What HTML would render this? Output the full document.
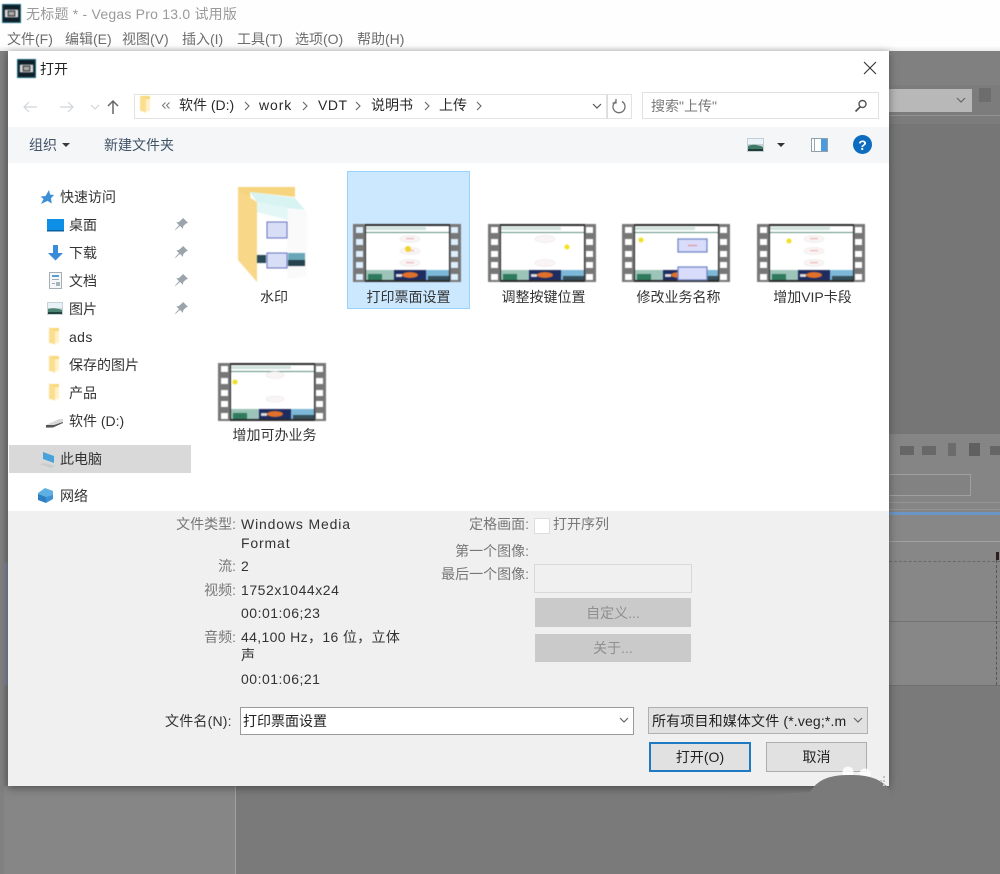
<!DOCTYPE html>
<html lang="zh"><head><meta charset="utf-8"><title>打开</title>
<style>
html,body{margin:0;padding:0;width:1000px;height:874px;overflow:hidden;background:#7a7a7a}
body{position:relative;font-family:"Liberation Sans","Noto Sans CJK SC",sans-serif;font-size:14px;color:#333;filter:blur(.3px)}
.a,.t{position:absolute}
.t{white-space:nowrap;line-height:20px}
.c{text-align:center}
.r{text-align:right}
.g{color:#777}
svg{position:absolute;overflow:visible}
.soft{filter:blur(.45px)}
</style></head><body>
<svg width="0" height="0" style="position:absolute"><defs>
<symbol id="film" viewBox="0 0 108 58" overflow="visible">
<rect width="108" height="58" fill="#777"/>
<g fill="#fff"><rect x="3" y="3" width="7" height="6"/><rect x="3" y="15" width="7" height="6"/><rect x="3" y="27" width="7" height="6"/><rect x="3" y="38" width="7" height="6"/><rect x="3" y="50" width="7" height="6"/><rect x="98" y="3" width="7" height="6"/><rect x="98" y="15" width="7" height="6"/><rect x="98" y="27" width="7" height="6"/><rect x="98" y="38" width="7" height="6"/><rect x="98" y="50" width="7" height="6"/></g>
<rect x="12" width="85" height="58" fill="#2b2b2b"/>
<rect x="13" y="2" width="83" height="54" fill="#fff"/>
<rect x="13" y="3" width="60" height="3" fill="#cfe3dc"/>
<rect x="13" y="8" width="83" height="1" fill="#5e8f80"/>
<rect x="13" y="46" width="28" height="10" fill="#9cc4b8"/><rect x="15" y="50" width="14" height="6" fill="#2f7a5d"/>
<rect x="41" y="46" width="32" height="10" fill="#1f2c60"/><ellipse cx="57" cy="51" rx="8" ry="3" fill="#e0702c"/><rect x="43" y="50" width="6" height="3" fill="#ddd"/>
<rect x="73" y="46" width="23" height="10" fill="#7db8d8"/><rect x="75" y="52" width="21" height="4" fill="#35505a"/>
</symbol>
<symbol id="ovals" viewBox="0 0 108 58" overflow="visible"><g fill="#f9f5f5" stroke="#ece4e4" stroke-width=".6"><ellipse cx="57" cy="15" rx="10" ry="3.500"/><ellipse cx="57" cy="27" rx="10" ry="3.500"/><ellipse cx="57" cy="39" rx="10" ry="3.500"/></g><g fill="#eeb6b6"><rect x="53" y="14" width="8" height="1.200"/><rect x="53" y="26" width="8" height="1.200"/><rect x="53" y="38" width="8" height="1.200"/></g></symbol>
<symbol id="mini" viewBox="0 0 14 17" overflow="visible"><path d="M2 0h10v15H2z" fill="#f9d676"/><path d="M2 0l6 3v14l-6-3z" fill="#fbdf90"/><path d="M8 3h4v12H8z" fill="#fff0c6"/></symbol>
<symbol id="pin" viewBox="0 0 12 12" overflow="visible"><path d="M7.500 0l4.500 4.500-2 .7-2.400 2.400-.3 2.400-2.700-2.700L1 10.500 0 11.500.5 10 3.700 6.600 1.200 4l2.400-.3L6 1.500z" fill="#9ba3ab"/></symbol>
<symbol id="vegas" viewBox="0 0 20 20" overflow="visible"><rect width="20" height="20" fill="#10202a"/><rect x=".5" y=".5" width="19" height="19" fill="none" stroke="#1b6d80"/><rect x="3" y="6" width="14" height="8" fill="#d9d9d9"/><rect x="6" y="7" width="8" height="6" fill="#222"/><rect x="7" y="8" width="6" height="4" fill="#aaa"/></symbol>
</defs></svg>

<!-- App chrome -->
<div class="a" style="left:0;top:0;width:1000px;height:51px;background:#fefefe"></div>
<div class="a" style="left:0;top:46px;width:1000px;height:6px;background:linear-gradient(#fefefe,#e6e6e6)"></div>
<svg style="left:2px;top:4px" width="19" height="19" class="soft"><use href="#vegas" width="19" height="19"/></svg>
<div class="t" style="left:26px;top:4px;font-size:14px;color:#9a9a9a;letter-spacing:.22px">无标题 * - Vegas Pro 13.0 试用版</div>
<div class="t" style="left:7px;top:29px;color:#6d6d6d">文件(F)</div>
<div class="t" style="left:65px;top:29px;color:#6d6d6d">编辑(E)</div>
<div class="t" style="left:122px;top:29px;color:#6d6d6d">视图(V)</div>
<div class="t" style="left:182px;top:29px;color:#6d6d6d">插入(I)</div>
<div class="t" style="left:237px;top:29px;color:#6d6d6d">工具(T)</div>
<div class="t" style="left:295px;top:29px;color:#6d6d6d">选项(O)</div>
<div class="t" style="left:357px;top:29px;color:#6d6d6d">帮助(H)</div>

<!-- Background panels -->
<div class="a" style="left:0;top:51px;width:1000px;height:823px;background:#7a7a7a"></div>
<div class="a" style="left:0;top:51px;width:4px;height:823px;background:#808080"></div>
<div class="a" style="left:4px;top:786px;width:232px;height:88px;background:#868686"></div>
<div class="a" style="left:235px;top:786px;width:1px;height:88px;background:#a2a2a2"></div>
<div class="a" style="left:4px;top:563px;width:4px;height:122px;background:#7b8196"></div>
<div class="a" style="left:889px;top:51px;width:111px;height:34px;background:#808080"></div>
<div class="a" style="left:889px;top:85px;width:111px;height:39px;background:#7c7c7c"></div>
<div class="a" style="left:889px;top:89px;width:83px;height:23px;background:#b8b8b8"></div>
<svg style="left:955px;top:96px" width="12" height="8"><path d="M2 2l4 4 4-4" fill="none" stroke="#666" stroke-width="1.2"/></svg>
<div class="a" style="left:979px;top:88px;width:12px;height:14px;background:#6d6d6d"></div>
<div class="a" style="left:889px;top:115px;width:111px;height:1px;background:#939393"></div>
<div class="a" style="left:889px;top:124px;width:111px;height:310px;background:#767676"></div>
<div class="a" style="left:889px;top:434px;width:111px;height:80px;background:#858585"></div>
<div class="a" style="left:900px;top:446px;width:14px;height:9px;background:#666"></div>
<div class="a" style="left:922px;top:446px;width:14px;height:9px;background:#686868"></div>
<div class="a" style="left:948px;top:443px;width:8px;height:13px;background:#6c6c6c"></div>
<div class="a" style="left:969px;top:443px;width:11px;height:13px;background:#606060"></div>
<div class="a" style="left:990px;top:446px;width:10px;height:9px;background:#666"></div>
<div class="a" style="left:889px;top:474px;width:81px;height:20px;border:1px solid #a0a0a0;border-left:0;background:#828282"></div>
<div class="a" style="left:889px;top:502px;width:111px;height:1px;background:#949494"></div>
<div class="a" style="left:889px;top:509px;width:111px;height:1px;background:#949494"></div>
<div class="a" style="left:889px;top:512px;width:111px;height:3px;background:#6d96c8"></div>
<div class="a" style="left:889px;top:515px;width:111px;height:170px;background:#878787"></div>
<div class="a" style="left:889px;top:541px;width:111px;height:1px;background:#a0a0a0"></div>
<div class="a" style="left:889px;top:561px;width:111px;height:1px;border-top:1px dashed #6a6a6a"></div>
<div class="a" style="left:889px;top:621px;width:111px;height:1px;background:#727272"></div>
<div class="a" style="left:889px;top:685px;width:111px;height:1px;background:#6f6f6f"></div>
<div class="a" style="left:996px;top:552px;width:3px;height:8px;background:#2d1f1f"></div>
<div class="a" style="left:996px;top:560px;width:0;height:125px;border-left:1px dashed #555"></div>

<!-- Dialog -->
<div class="a" style="left:8px;top:51px;width:881px;height:735px;background:#fff;box-shadow:0 2px 8px rgba(30,30,30,.5)"></div>
<svg style="left:17px;top:59px" width="19" height="19" class="soft"><use href="#vegas" width="19" height="19"/></svg>
<div class="t" style="left:40px;top:59px;color:#222">打开</div>
<svg style="left:863px;top:61px" width="14" height="14"><path d="M1 1l12 12M13 1L1 13" stroke="#333" stroke-width="1.1" fill="none"/></svg>

<!-- Nav -->
<svg style="left:22px;top:98px" width="120" height="18">
<g fill="none" stroke="#d0d5da" stroke-width="1.2"><path d="M2 9h13M7 4L2 9l5 5"/><path d="M38 9h13M46 4l5 5-5 5"/><path d="M69 7l4 4 4-4"/></g>
<path d="M91 16V3M86 8l5-5 5 5" fill="none" stroke="#666" stroke-width="1.5"/></svg>
<div class="a" style="left:134px;top:94px;width:471px;height:23px;border:1px solid #e2e2e2;background:#fff"></div>
<svg style="left:138px;top:96px" width="14" height="17" class="soft"><use href="#mini" width="14" height="17"/></svg>
<svg style="left:161px;top:101px" width="10" height="9"><path d="M4.500 1.500L1.500 4.500l3 3M8.500 1.500l-3 3 3 3" fill="none" stroke="#777" stroke-width="1"/></svg>
<div class="t" style="left:179px;top:95px;color:#2a2a2a">软件 (D:)</div>
<div class="t" style="left:259px;top:95px;color:#2a2a2a;letter-spacing:.9px">work</div>
<div class="t" style="left:318px;top:95px;color:#2a2a2a;letter-spacing:.5px">VDT</div>
<div class="t" style="left:371px;top:95px;color:#2a2a2a">说明书</div>
<div class="t" style="left:439px;top:95px;color:#2a2a2a">上传</div>
<svg style="left:240px;top:100px" width="250" height="12"><g fill="none" stroke="#666" stroke-width="1.1"><path d="M5 2l4 4-4 4M63 2l4 4-4 4M116 2l4 4-4 4M185 2l4 4-4 4M237 2l4 4-4 4"/></g></svg>
<svg style="left:591px;top:102px" width="12" height="9"><path d="M2 2l4 4 4-4" fill="none" stroke="#555" stroke-width="1.2"/></svg>
<div class="a" style="left:607px;top:94px;width:23px;height:23px;border:1px solid #e2e2e2;border-left:1px solid #dcdcdc"></div>
<svg style="left:611px;top:98px" width="16" height="16"><path d="M5 3.500a6 6 0 1 0 6 0M5 1v4H1.500" fill="none" stroke="#707070" stroke-width="1.300"/></svg>
<div class="a" style="left:642px;top:92px;width:235px;height:25px;border:1px solid #dfe1e3;background:#fff"></div>
<div class="t" style="left:651px;top:96px;color:#7a7a7a">搜索"上传"</div>
<svg style="left:854px;top:99px" width="14" height="14"><circle cx="8.500" cy="5" r="3.500" fill="none" stroke="#555" stroke-width="1.400"/><path d="M6 8l-4.500 4.500" stroke="#555" stroke-width="1.800"/></svg>

<!-- Toolbar -->
<div class="a" style="left:8px;top:127px;width:881px;height:36px;background:#f5f6f8"></div>
<div class="t" style="left:29px;top:135px;color:#3f5367">组织</div>
<svg style="left:62px;top:143px" width="8" height="5"><path d="M0 0h8L4 4z" fill="#3a3a3a"/></svg>
<div class="t" style="left:104px;top:135px;color:#3f5367">新建文件夹</div>
<svg style="left:747px;top:138px" width="17" height="14"><rect width="17" height="14" fill="#c4d0d6"/><rect x="1" y="1" width="15" height="5" fill="#e9f3f9"/><path d="M1 8q6-3 15 1v4H1z" fill="#3f7b68"/><rect x="1" y="11" width="15" height="2" fill="#1e3d3a"/></svg>
<svg style="left:777px;top:143px" width="8" height="5"><path d="M0 0h8L4 4z" fill="#333"/></svg>
<svg style="left:811px;top:138px" width="17" height="14"><rect x=".5" y=".5" width="16" height="13" fill="#fff" stroke="#8fa1ad"/><rect x="10" y="1" width="6" height="12" fill="#4a9ade"/><rect x="3" y="1" width="1" height="12" fill="#9aa"/></svg>
<svg style="left:853px;top:135px" width="19" height="19"><circle cx="9.500" cy="9.500" r="9.500" fill="#0b6cc0"/><text x="9.500" y="15" text-anchor="middle" fill="#fff" font-size="14" font-weight="bold" font-family="Liberation Sans">?</text></svg>

<!-- Sidebar -->
<svg style="left:39px;top:190px" width="15" height="15"><path d="M10 0l1 4.500 4 .5-3 3.200 .8 5.300-4.300-2.600L2 14l2.500-5L1.500 6.500 6.500 6z" fill="#3d8fd6"/></svg>
<div class="t" style="left:60px;top:187px">快速访问</div>
<svg style="left:47px;top:219px" width="17" height="13"><rect width="17" height="12" fill="#0d8fe6"/><rect y="11" width="17" height="1.500" fill="#0a5f9f"/></svg>
<div class="t" style="left:69px;top:215px">桌面</div>
<svg style="left:48px;top:245px" width="15" height="16"><path d="M5 0h5v8h5l-7.500 7.500L0 8h5z" fill="#3a8bd8"/></svg>
<div class="t" style="left:69px;top:243px">下载</div>
<svg style="left:49px;top:272px" width="13" height="17"><rect x=".5" y=".5" width="12" height="16" fill="#f5f7f8" stroke="#a4adb3"/><rect x="3" y="3" width="7" height="2" fill="#5b9bd5"/><rect x="3" y="7" width="7" height="1" fill="#9fa9b0"/><rect x="7" y="10" width="4" height="4" fill="#a5b5be"/><rect x="3" y="11" width="3" height="1" fill="#9fa9b0"/></svg>
<div class="t" style="left:69px;top:271px">文档</div>
<svg style="left:47px;top:302px" width="16" height="13"><rect width="16" height="13" fill="#c8d1d6"/><rect x="1" y="1" width="14" height="5" fill="#e7f2f8"/><path d="M1 7q6-2 14 1v4H1z" fill="#4b8572"/><rect x="1" y="10" width="14" height="2" fill="#22443e"/></svg>
<div class="t" style="left:69px;top:299px">图片</div>
<svg style="left:175px;top:218px" width="13" height="13"><use href="#pin" width="13" height="13"/></svg>
<svg style="left:175px;top:246px" width="13" height="13"><use href="#pin" width="13" height="13"/></svg>
<svg style="left:175px;top:274px" width="13" height="13"><use href="#pin" width="13" height="13"/></svg>
<svg style="left:175px;top:302px" width="13" height="13"><use href="#pin" width="13" height="13"/></svg>
<svg style="left:47px;top:328px" width="14" height="17" class="soft"><use href="#mini" width="14" height="17"/></svg>
<div class="t" style="left:69px;top:327px;letter-spacing:.4px">ads</div>
<svg style="left:47px;top:356px" width="14" height="17" class="soft"><use href="#mini" width="14" height="17"/></svg>
<div class="t" style="left:69px;top:355px">保存的图片</div>
<svg style="left:47px;top:384px" width="14" height="17" class="soft"><use href="#mini" width="14" height="17"/></svg>
<div class="t" style="left:69px;top:383px">产品</div>
<svg style="left:46px;top:418px" width="18" height="11"><path d="M0 7l13-6h4v3L3 10H0z" fill="#d9d9d9"/><path d="M0 7h8l9-3v1L7 9.500H0z" fill="#555"/></svg>
<div class="t" style="left:69px;top:411px">软件 (D:)</div>
<div class="a" style="left:9px;top:445px;width:182px;height:28px;background:#d9d9d9"></div>
<svg style="left:38px;top:451px" width="19" height="18"><path d="M5 1l11 4v7L5 8z" fill="#48a3da"/><path d="M1 13l12 4 4-2-10-3z" fill="#c8cdd0"/></svg>
<div class="t" style="left:60px;top:449px">此电脑</div>
<svg style="left:37px;top:487px" width="17" height="17"><path d="M8 1l8 3v5l-8 3-7-2V6z" fill="#5fb0e2"/><path d="M1 7l8 3v6l-8-3z" fill="#2d7fc4"/><path d="M9 10l7-2v4l-7 4z" fill="#3e92d2"/></svg>
<div class="t" style="left:60px;top:486px">网络</div>

<!-- Files -->
<div class="a" style="left:347px;top:171px;width:121px;height:136px;background:#cce8ff;border:1px solid #99d1ff;box-sizing:content-box"></div>
<svg style="left:236px;top:185px" width="76" height="98" viewBox="236 185 76 98" class="soft">
<path d="M238 187h57v20h-57z" fill="#f6d47e"/>
<path d="M250 192l45 5 12 13v65l-19 3-31 4z" fill="#fff"/>
<path d="M287 205l20 6v65l-20 3z" fill="#fafafa"/>
<path d="M250 192l45 6 10 12-17-2-31-6z" fill="#d7f3f2"/>
<path d="M257 202l31 6v12l-31-8z" fill="#e3f7f6"/>
<rect x="267" y="222" width="20" height="16" fill="#d8def6" stroke="#6673c0"/>
<rect x="267" y="253" width="20" height="15" fill="#d8def6" stroke="#6673c0"/>
<rect x="257" y="255" width="9" height="8" fill="#2a4a5a"/>
<rect x="288" y="253" width="17" height="8" fill="#6aa6ba"/>
<rect x="288" y="260" width="17" height="6" fill="#25424e"/>
<path d="M238 190l19 12v80l-19-22z" fill="#f8d789"/>
</svg>
<div class="t c" style="left:234px;top:287px;width:80px">水印</div>

<svg style="left:353px;top:224px" width="108" height="58" class="soft"><use href="#film" width="108" height="58"/><use href="#ovals" width="108" height="58"/><circle cx="55" cy="25" r="3" fill="#f0d32a"/>
<g fill="#cce8ff" fill-opacity=".7"><rect x="3" y="3" width="7" height="6"/><rect x="3" y="15" width="7" height="6"/><rect x="3" y="27" width="7" height="6"/><rect x="3" y="38" width="7" height="6"/><rect x="3" y="50" width="7" height="6"/><rect x="98" y="3" width="7" height="6"/><rect x="98" y="15" width="7" height="6"/><rect x="98" y="27" width="7" height="6"/><rect x="98" y="38" width="7" height="6"/><rect x="98" y="50" width="7" height="6"/></g></svg>
<div class="t c" style="left:348px;top:287px;width:121px">打印票面设置</div>

<svg style="left:488px;top:224px" width="108" height="58" class="soft"><use href="#film" width="108" height="58"/><g fill="#f9f5f5" stroke="#ece4e4" stroke-width=".6"><ellipse cx="57" cy="15" rx="10" ry="3.500"/><ellipse cx="57" cy="39" rx="10" ry="3.500"/></g><circle cx="79" cy="23" r="2.500" fill="#f5e11c"/></svg>
<div class="t c" style="left:483px;top:287px;width:121px">调整按键位置</div>

<svg style="left:622px;top:224px" width="108" height="58" class="soft"><use href="#film" width="108" height="58"/><circle cx="19" cy="16" r="2.500" fill="#f0e020"/><rect x="56" y="15" width="29" height="13" fill="#d9dcfa" stroke="#6b81c4" stroke-width="1.200"/><rect x="56" y="43" width="29" height="13" fill="#d9dcfa" stroke="#6b81c4" stroke-width="1.200"/><rect x="66" y="21" width="9" height="1" fill="#d88"/></svg>
<div class="t c" style="left:618px;top:287px;width:121px">修改业务名称</div>

<svg style="left:757px;top:224px" width="108" height="58" class="soft"><use href="#film" width="108" height="58"/><use href="#ovals" width="108" height="58"/><circle cx="32" cy="17" r="2.500" fill="#f0e020"/></svg>
<div class="t c" style="left:752px;top:287px;width:121px">增加VIP卡段</div>

<svg style="left:218px;top:363px" width="108" height="58" class="soft"><use href="#film" width="108" height="58"/><g fill="#f9f5f5" stroke="#ece4e4" stroke-width=".6"><ellipse cx="57" cy="12" rx="9" ry="3.500"/><ellipse cx="57" cy="36" rx="9" ry="3"/></g><circle cx="17" cy="19" r="2.500" fill="#f0e020"/></svg>
<div class="t c" style="left:214px;top:425px;width:121px">增加可办业务</div>

<!-- Bottom panel -->
<div class="a" style="left:8px;top:511px;width:881px;height:275px;background:#f0f0f0"></div>
<div class="t r g" style="left:136px;top:514px;width:100px">文件类型:</div>
<div class="t" style="left:241px;top:514px;letter-spacing:.85px">Windows Media</div>
<div class="t" style="left:241px;top:533px;letter-spacing:.85px">Format</div>
<div class="t r g" style="left:136px;top:556px;width:100px">流:</div>
<div class="t" style="left:241px;top:556px">2</div>
<div class="t r g" style="left:136px;top:580px;width:100px">视频:</div>
<div class="t" style="left:241px;top:580px;letter-spacing:.55px">1752x1044x24</div>
<div class="t" style="left:241px;top:603px;letter-spacing:.5px">00:01:06;23</div>
<div class="t r g" style="left:136px;top:627px;width:100px">音频:</div>
<div class="t" style="left:241px;top:627px;letter-spacing:.35px">44,100 Hz，16 位，立体</div>
<div class="t" style="left:241px;top:645px">声</div>
<div class="t" style="left:241px;top:669px;letter-spacing:.5px">00:01:06;21</div>

<div class="t r g" style="left:429px;top:514px;width:100px">定格画面:</div>
<div class="a" style="left:534px;top:518px;width:14px;height:14px;background:#fff;border:1px solid #ddd"></div>
<div class="t g" style="left:553px;top:514px">打开序列</div>
<div class="t r g" style="left:429px;top:541px;width:100px">第一个图像:</div>
<div class="t r g" style="left:429px;top:564px;width:100px">最后一个图像:</div>
<div class="a" style="left:534px;top:564px;width:156px;height:27px;background:#f0f0f0;border:1px solid #d9d9d9"></div>
<div class="a" style="left:535px;top:598px;width:156px;height:29px;background:#cacaca"></div>
<div class="t c" style="left:535px;top:603px;width:156px;color:#8f8f8f">自定义...</div>
<div class="a" style="left:535px;top:634px;width:156px;height:28px;background:#cacaca"></div>
<div class="t c" style="left:535px;top:638px;width:156px;color:#8f8f8f">关于...</div>

<div class="t" style="left:165px;top:711px;letter-spacing:.2px">文件名(N):</div>
<div class="a" style="left:240px;top:707px;width:392px;height:26px;background:#fff;border:1px solid #9a9a9a"></div>
<div class="t" style="left:243px;top:711px;color:#222">打印票面设置</div>
<svg style="left:618px;top:716px" width="12" height="9"><path d="M2 2l4 4 4-4" fill="none" stroke="#666" stroke-width="1.2"/></svg>
<div class="a" style="left:648px;top:707px;width:218px;height:25px;background:#e1e1e1;border:1px solid #b0b0b0"></div>
<div class="t" style="left:652px;top:711px;width:194px;overflow:hidden;color:#222;letter-spacing:.15px">所有项目和媒体文件 (*.veg;*.mp4;*.avi)</div>
<svg style="left:852px;top:716px" width="12" height="9"><path d="M2 2l4 4 4-4" fill="none" stroke="#666" stroke-width="1.2"/></svg>
<div class="a" style="left:649px;top:742px;width:98px;height:26px;background:#e1e1e1;border:2px solid #1f7ac4"></div>
<div class="t c" style="left:649px;top:747px;width:102px;color:#222">打开(O)</div>
<div class="a" style="left:766px;top:742px;width:99px;height:28px;background:#e1e1e1;border:1px solid #adadad"></div>
<div class="t c" style="left:766px;top:747px;width:101px;color:#222">取消</div>

<!-- Watermark blob -->
<svg style="left:700px;top:760px" width="200" height="45">
<circle cx="148" cy="12" r="5.500" fill="#fff" fill-opacity=".85"/><circle cx="165" cy="14" r="5.500" fill="#fff" fill-opacity=".85"/>
<path d="M12 42Q70 34 110 32Q120 14 150 15Q178 14 190 30L189 45H12z" fill="#7a7a7a"/>
<g fill="#c4c4c4"><rect x="180" y="20" width="2" height="2"/><rect x="183" y="16" width="2" height="2"/><rect x="183" y="20" width="2" height="2"/><rect x="183" y="24" width="2" height="2"/></g>
</svg>
</body></html>
